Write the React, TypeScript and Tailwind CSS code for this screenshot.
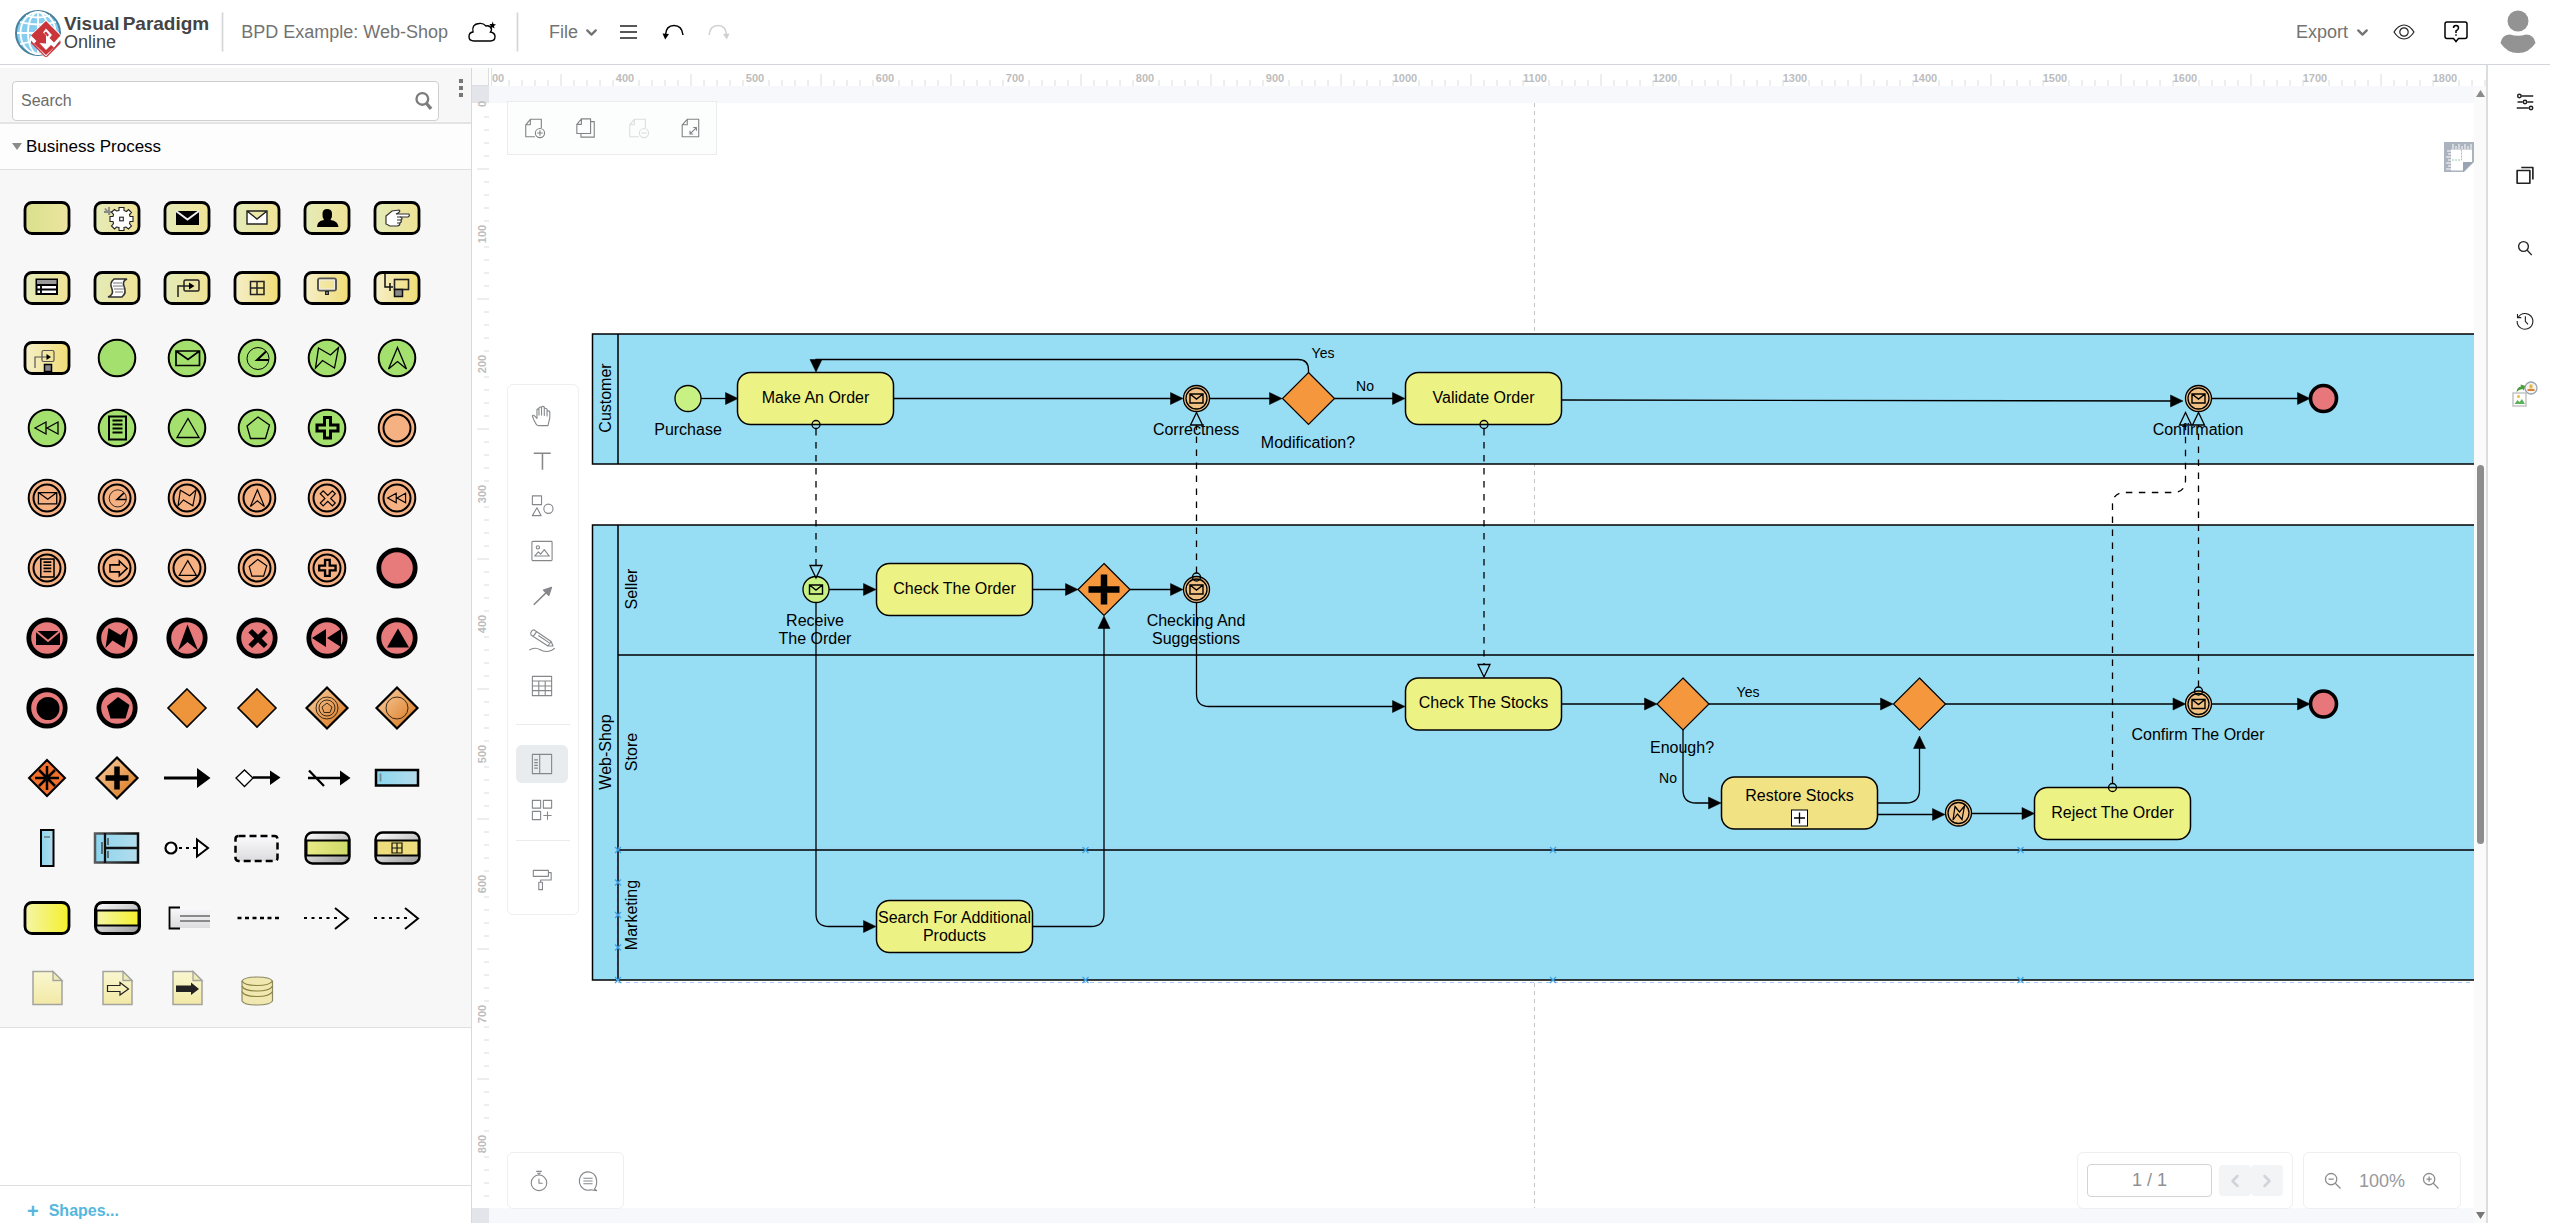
import type { ReactNode } from "react";
import { ChevronDown, ChevronLeft, ChevronRight } from "lucide-react";

/* ---------- shared drawing helpers ---------- */

function Icon({
  children,
  size = 24,
  className = "",
}: {
  children: ReactNode;
  size?: number;
  className?: string;
}) {
  return (
    <svg
      width={size}
      height={size}
      viewBox="0 0 24 24"
      fill="none"
      stroke="currentColor"
      strokeWidth={1.2}
      strokeLinejoin="round"
      className={className}
      aria-hidden="true"
    >
      {children}
    </svg>
  );
}

function Logo() {
  return (
    <svg width="50" height="50" viewBox="12 5 50 50" aria-hidden="true">
      <circle cx="38" cy="31" r="22" fill="#86cdf0" stroke="#47809c" strokeWidth="2" />
      <g fill="none" stroke="#fff" strokeWidth="1.8">
        <ellipse cx="38" cy="31" rx="10" ry="21" />
        <ellipse cx="38" cy="31" rx="17.5" ry="21" />
        <path d="M38 10v42M17 31h42M20 20q18 5 36 0M20 42q18-5 36 0M26 13.500q12 4 24 0" />
      </g>
      <path d="M46 17.500 62.500 34.500 46 57 29.500 38 31 33Z" fill="#fff" />
      <path d="M46 19 60.500 33.500 54 40.500 46 32.500v9L38.500 41 31 33.500Z" fill="#c9353b" />
      <path d="M46 26.500l6 6.500-3 3.500-6-6Z" fill="#fff" />
      <path d="M46 29.500l3 3.500-1.500 1.500L44 31Z" fill="#c9353b" />
      <path d="M31 38.500 46 54.500 60.500 38.500 60.500 41.500 46 56 31 41Z" fill="#c9353b" />
      <path d="M37 38.500 46 48l5-5 3 2.500-8 7.500-12-11.500Z" fill="#c9353b" />
    </svg>
  );
}

/* ---------- shape palette ---------- */

type Tone = "lime" | "mix" | "gold" | "bright";

const toneFill: Record<Tone, string> = {
  lime: "url(#g-lime)",
  mix: "url(#g-mix)",
  gold: "url(#g-gold)",
  bright: "url(#g-bright)",
};

function Gradients() {
  return (
    <svg width="0" height="0" className="absolute" aria-hidden="true">
      <defs>
        <linearGradient id="g-lime"><stop stopColor="#d9e08c" /><stop offset="1" stopColor="#ece5a0" /></linearGradient>
        <linearGradient id="g-mix"><stop stopColor="#e4ebb8" /><stop offset="1" stopColor="#efe295" /></linearGradient>
        <linearGradient id="g-gold"><stop stopColor="#f5efca" /><stop offset="1" stopColor="#f0dc74" /></linearGradient>
        <linearGradient id="g-bright"><stop stopColor="#f5f5a8" /><stop offset="1" stopColor="#f4f02c" /></linearGradient>
        <linearGradient id="g-band"><stop stopColor="#e9ea86" /><stop offset="1" stopColor="#d0d868" /></linearGradient>
        <linearGradient id="g-gray" x2="1" y2="1"><stop stopColor="#fff" /><stop offset="1" stopColor="#9a9a9a" /></linearGradient>
        <linearGradient id="g-pale" x2="0" y2="1"><stop stopColor="#fafafc" /><stop offset="1" stopColor="#dcdcde" /></linearGradient>
        <linearGradient id="g-blue"><stop stopColor="#8bd6f0" /><stop offset="1" stopColor="#b4dcec" /></linearGradient>
        <linearGradient id="g-pool"><stop stopColor="#5a5a5a" /><stop offset="1" stopColor="#0c0c0c" /></linearGradient>
        <linearGradient id="g-orange" x2="1" y2="1"><stop offset="0.200" stopColor="#f3c08c" /><stop offset="0.800" stopColor="#de8430" /></linearGradient>
        <linearGradient id="g-note" x2="0" y2="1"><stop stopColor="#faf7d0" /><stop offset="1" stopColor="#f2e9a6" /></linearGradient>
      </defs>
    </svg>
  );
}

function Task({ tone = "mix", children }: { tone?: Tone; children?: ReactNode }) {
  return (
    <>
      <rect x="-22" y="-15.500" width="44" height="31" rx="7" fill={toneFill[tone]} stroke="#000" strokeWidth="2.800" />
      {children}
    </>
  );
}

function Start({ children }: { children?: ReactNode }) {
  return (
    <>
      <circle r="18.300" fill="#a3e06e" stroke="#000" strokeWidth="2" />
      <g fill="none" stroke="#000" strokeWidth="1.300">{children}</g>
    </>
  );
}

function Mid({ children }: { children?: ReactNode }) {
  return (
    <>
      <circle r="18.300" fill="#f6b183" stroke="#000" strokeWidth="2" />
      <circle r="13.500" fill="none" stroke="#000" strokeWidth="2" />
      <g fill="none" stroke="#000" strokeWidth="1.500" transform="scale(0.780)">{children}</g>
    </>
  );
}

function End({ children }: { children?: ReactNode }) {
  return (
    <>
      <circle r="18.200" fill="#e77a7b" stroke="#000" strokeWidth="4.800" />
      <g fill="#000">{children}</g>
    </>
  );
}

function Diamond({ fill = "#ee943b", r = 19, sw = 1.6, children }: { fill?: string; r?: number; sw?: number; children?: ReactNode }) {
  return (
    <>
      <path d={`M0 ${-r}L${r} 0L0 ${r}L${-r} 0Z`} fill={fill} stroke="#000" strokeWidth={sw} />
      {children}
    </>
  );
}

function Note({ children }: { children?: ReactNode }) {
  return (
    <>
      <path d="M-14-16.500H6L15-7.500V16.500H-14Z" fill="url(#g-note)" stroke="#a3a3a0" strokeWidth="1.500" />
      <path d="M6-16.500V-7.500H15Z" fill="#f0eab4" stroke="#a3a3a0" strokeWidth="1.300" />
      {children}
    </>
  );
}

const envelope = <path d="M-11-7H12.500V7.500H-11ZM-11-7L1 1.500L12.500-7" strokeWidth="1.700" />;
const timer = (
  <>
    <circle cx="1" cy="0.500" r="11" strokeWidth="1" />
    <path d="M9-6.500L0 2H12" strokeWidth="2" />
  </>
);
const bolt = <path d="M-11.500 10L-8.500-10L3.500-3L11.500-10.500L7.500 10L-4.500 2.500Z" />;
const escalate = <path d="M0.500-10.500L9.500 11L0.500 3.500L-8.500 11Z" />;
const rewind = <path d="M-12 0L-1-6V6ZM0 0L11-6V6Z" />;
const rule = (
  <>
    <rect x="-8" y="-11.500" width="17" height="23" strokeWidth="2" />
    <path d="M-4.500-7.500H5.500M-4.500-3.500H5.500M-4.500 0.500H5.500M-4.500 4.500H5.500" strokeWidth="2" />
  </>
);
const triangle = <path d="M1-9.500L12 9.500H-10Z" />;
const pentagon = <path d="M1-11L12.500-3L8.500 10.500H-6.500L-10-2Z" />;
const cross = (
  <path d="M-2.600-11H2.600V-2.600H11V2.600H2.600V11H-2.600V2.600H-11V-2.600H-2.600Z" transform="translate(1 0.500) rotate(45)" />
);
const plusOutline = <path d="M-2.500-10.500H3.500V-3H11V3H3.500V10H-2.500V3H-10V-3H-2.500Z" strokeWidth="3" />;
const linkArrow = <path d="M-9-4H3V-9L13 0.500L3 10V5H-9Z" strokeWidth="2" />;
const gridMark = <path d="M-6.500-6.500H7V6.500H-6.500ZM0-6.500V6.500M-6.500 0H7" fill="none" stroke="#222" strokeWidth="1.500" />;

const palette: { name: string; art: ReactNode }[] = [
  { name: "Task", art: <Task tone="lime" /> },
  {
    name: "Service task",
    art: (
      <Task>
        <path d="M-13-6h8M-8-11v8M-12-9.500l5 6" stroke="#888" strokeWidth="1.800" />
        <g fill="#fff" stroke="#222" strokeWidth="1.100" transform="translate(4.500 1)">
          <path d="M-2.500-11.500H2.500V-8.500L5-7.500L7-9.500L10-6.500L8-4.500L8.500-2.500H11.500V2.500H8.500L8 4.500L10 7L7 10L4.500 8L2.500 8.500V11.500H-2.500V8.500L-5 8L-7 10L-10 7L-8 4.500L-8.500 2.500H-11.500V-2.500H-8.500L-8-4.500L-10-7L-7-9.500L-5-8L-2.500-8.500Z" />
          <rect x="-1.800" y="-1.800" width="3.600" height="3.600" />
        </g>
      </Task>
    ),
  },
  {
    name: "Send task",
    art: (
      <Task>
        <rect x="-11" y="-7" width="23" height="14" />
        <path d="M-11-7L0.500 1.500L12-7" fill="none" stroke="#eee" strokeWidth="2" />
      </Task>
    ),
  },
  {
    name: "Receive task",
    art: (
      <Task>
        <path d="M-10-7H10V6H-10ZM-10-7L0 1L10-7" fill="#fff" stroke="#222" strokeWidth="1.400" />
      </Task>
    ),
  },
  {
    name: "User task",
    art: (
      <Task>
        <path d="M-10 9Q-10 3-3 2Q-5-1-4.500-5Q-4-9 0-9Q4.500-9 5-5Q5.500-1 3.500 2Q11 3 11.500 9Z" />
      </Task>
    ),
  },
  {
    name: "Manual task",
    art: (
      <Task>
        <path d="M-11-2L-5-7L2-8Q4-7 1-5L-1-4H12Q13-2 11-1L4-1Q6 1 4 2Q5 4 3 5Q3 8 0 8H-7L-11 6Z" fill="#fff" stroke="#333" strokeWidth="1.200" />
        <path d="M0-1h4M0 2h4M0 5h3" stroke="#333" strokeWidth="1" />
      </Task>
    ),
  },
  {
    name: "Business rule task",
    art: (
      <Task>
        <path d="M-10.500-8.500H10V6H-10.500Z" fill="#fff" stroke="#000" strokeWidth="2" />
        <path d="M-10-8H9.500V-4H-10Z" fill="#999" />
        <path d="M-10.500-3H10M-10.500 1.500H10M-6-3V6" stroke="#000" strokeWidth="1.800" />
      </Task>
    ),
  },
  {
    name: "Script task",
    art: (
      <Task>
        <path d="M-3-9H10Q5-7 7-2Q10 5 5 9H-9Q-3 7-5 1Q-8-5-3-9Z" fill="#fff" stroke="#333" strokeWidth="1.600" />
        <path d="M-4-5H5M-4-2H6M-3 1H7M-2 4H6" stroke="#777" strokeWidth="1.200" />
      </Task>
    ),
  },
  {
    name: "Reference task",
    art: (
      <Task>
        <rect x="-3" y="-8" width="15" height="11" rx="1.500" fill="none" stroke="#222" strokeWidth="1.500" />
        <path d="M-9 9V-2H4" fill="none" stroke="#222" strokeWidth="1.500" />
        <path d="M2-5.500L7.500-2L2 1.500Z" />
      </Task>
    ),
  },
  { name: "Sub-process", art: <Task tone="gold">{gridMark}</Task> },
  {
    name: "Call activity",
    art: (
      <Task tone="gold">
        <rect x="-9" y="-9.500" width="18" height="12" rx="2" fill="none" stroke="#555" strokeWidth="2" />
        <rect x="-7.500" y="-8" width="15" height="9" fill="none" stroke="#eee" strokeWidth="1" />
        <rect x="-1.500" y="3.500" width="3" height="3" fill="#777" stroke="#222" />
      </Task>
    ),
  },
  {
    name: "Reusable sub-process",
    art: (
      <Task tone="gold">
        <path d="M-12-14V-1H-4M-7-5V3" fill="none" stroke="#111" strokeWidth="1.500" />
        <rect x="-2.500" y="-8.500" width="14" height="10" fill="none" stroke="#222" strokeWidth="1.600" />
        <rect x="-2.500" y="1.500" width="8" height="7" fill="#888" stroke="#111" strokeWidth="1.500" />
      </Task>
    ),
  },
  {
    name: "Reference sub-process",
    art: (
      <Task tone="gold">
        <rect x="-5" y="-7.500" width="12" height="11" rx="1.500" fill="none" stroke="#555" strokeWidth="1.200" />
        <path d="M-12 10V-1H2" fill="none" stroke="#555" strokeWidth="1.200" />
        <path d="M-0.500-4L4-1L-0.500 2Z" />
        <rect x="-2.500" y="6.500" width="7" height="7" fill="#888" stroke="#000" strokeWidth="1.500" />
      </Task>
    ),
  },
  { name: "Start event", art: <Start /> },
  { name: "Message start event", art: <Start>{envelope}</Start> },
  { name: "Timer start event", art: <Start>{timer}</Start> },
  { name: "Error start event", art: <Start>{bolt}</Start> },
  { name: "Escalation start event", art: <Start>{escalate}</Start> },
  { name: "Compensation start event", art: <Start>{rewind}</Start> },
  { name: "Conditional start event", art: <Start>{rule}</Start> },
  { name: "Signal start event", art: <Start>{triangle}</Start> },
  { name: "Multiple start event", art: <Start>{pentagon}</Start> },
  { name: "Parallel start event", art: <Start>{plusOutline}</Start> },
  { name: "Intermediate event", art: <Mid /> },
  { name: "Message intermediate event", art: <Mid>{envelope}</Mid> },
  { name: "Timer intermediate event", art: <Mid>{timer}</Mid> },
  { name: "Error intermediate event", art: <Mid>{bolt}</Mid> },
  { name: "Escalation intermediate event", art: <Mid>{escalate}</Mid> },
  { name: "Cancel intermediate event", art: <Mid>{cross}</Mid> },
  { name: "Compensation intermediate event", art: <Mid>{rewind}</Mid> },
  { name: "Conditional intermediate event", art: <Mid>{rule}</Mid> },
  { name: "Link intermediate event", art: <Mid>{linkArrow}</Mid> },
  { name: "Signal intermediate event", art: <Mid>{triangle}</Mid> },
  { name: "Multiple intermediate event", art: <Mid>{pentagon}</Mid> },
  { name: "Parallel intermediate event", art: <Mid>{plusOutline}</Mid> },
  { name: "End event", art: <End /> },
  {
    name: "Message end event",
    art: (
      <End>
        <rect x="-11" y="-7" width="24" height="14" />
        <path d="M-11-7L1 3L13-7" fill="none" stroke="#e77a7b" strokeWidth="2" />
      </End>
    ),
  },
  { name: "Error end event", art: <End>{bolt}</End> },
  { name: "Escalation end event", art: <End><path d="M0.500-13.500L11 12.500L0.500 4L-9 12.500Z" /></End> },
  { name: "Cancel end event", art: <End>{cross}</End> },
  { name: "Compensation end event", art: <End><path d="M-15 0L-1-9V9ZM0 0L14-9V9Z" /></End> },
  { name: "Signal end event", art: <End>{triangle}</End> },
  { name: "Terminate end event", art: <End><circle cx="1" cy="0.500" r="11.500" /></End> },
  { name: "Multiple end event", art: <End>{pentagon}</End> },
  { name: "Gateway", art: <Diamond /> },
  { name: "Exclusive gateway", art: <Diamond /> },
  {
    name: "Event gateway",
    art: (
      <Diamond fill="url(#g-orange)" r={20.500} sw={2.200}>
        <g fill="none" stroke="#3a2a18" strokeWidth="1">
          <circle r="11" />
          <circle r="8" />
          <path d="M0-5L5-1L3 4.500H-3L-5-1Z" />
        </g>
      </Diamond>
    ),
  },
  {
    name: "Inclusive gateway",
    art: (
      <Diamond fill="url(#g-orange)" r={20.500} sw={2.200}>
        <circle r="11" fill="none" stroke="#3a2a18" strokeWidth="1" />
      </Diamond>
    ),
  },
  {
    name: "Complex gateway",
    art: (
      <Diamond fill="#f0702c" r={18} sw={2}>
        <path d="M0-12V12M-12 0H12M-8-8L8 8M8-8L-8 8" stroke="#000" strokeWidth="2.500" />
      </Diamond>
    ),
  },
  {
    name: "Parallel gateway",
    art: (
      <Diamond fill="url(#g-orange)" r={20.500} sw={2.200}>
        <path d="M0-11.500V11.500M-11.500 0H11.500" stroke="#000" strokeWidth="5.500" />
      </Diamond>
    ),
  },
  { name: "Sequence flow", art: <path d="M-23-1.500H10V-10L23.500 0L10 10V1.500H-23Z" /> },
  {
    name: "Conditional flow",
    art: (
      <>
        <path d="M-4-0.500H14" stroke="#000" strokeWidth="2.500" />
        <path d="M13-7.500L23.500-0.500L13 7Z" />
        <path d="M-21 0L-12.500-8L-4 0L-12.500 8.500Z" fill="#fff" stroke="#000" strokeWidth="1.300" />
      </>
    ),
  },
  {
    name: "Default flow",
    art: (
      <>
        <path d="M-19 0H14M-18-7.500L-3 8" stroke="#000" strokeWidth="2.300" />
        <path d="M13-7.500L23.500 0L13 7.500Z" />
      </>
    ),
  },
  {
    name: "Horizontal pool",
    art: (
      <>
        <rect x="-21" y="-8" width="42" height="15.500" fill="url(#g-blue)" stroke="#000" strokeWidth="2.500" />
        <path d="M-16.500-4.500V3.500" stroke="#7a8a92" strokeWidth="1.800" />
      </>
    ),
  },
  {
    name: "Vertical pool",
    art: (
      <>
        <rect x="-6" y="-18" width="12.500" height="36" fill="url(#g-blue)" stroke="#000" strokeWidth="2" />
        <path d="M-3-11H3" stroke="#6a7a82" strokeWidth="1.500" />
      </>
    ),
  },
  {
    name: "Pool with lanes",
    art: (
      <>
        <rect x="-22" y="-14.500" width="43" height="29" fill="url(#g-blue)" stroke="url(#g-pool)" strokeWidth="2.500" />
        <path d="M-12-15V15M-12 0H21" stroke="#111" strokeWidth="2.300" />
        <path d="M-15-6V6M-9-10V-3M-9 3V10" stroke="#5c6a72" strokeWidth="2" />
      </>
    ),
  },
  {
    name: "Message flow",
    art: (
      <>
        <circle cx="-16" r="5.500" fill="#fff" stroke="#000" strokeWidth="2.200" />
        <path d="M-8 0H10" stroke="#000" strokeWidth="2" strokeDasharray="3 4" />
        <path d="M10-8.500V8.500L21 0Z" fill="#fff" stroke="#000" strokeWidth="2" />
      </>
    ),
  },
  {
    name: "Group",
    art: <rect x="-21.500" y="-12" width="42" height="25" rx="3" fill="url(#g-pale)" stroke="#000" strokeWidth="2.500" strokeDasharray="7 4" />,
  },
  {
    name: "Transaction",
    art: (
      <>
        <rect x="-21.500" y="-15.500" width="44" height="31" rx="7" fill="url(#g-gray)" stroke="#000" strokeWidth="2.400" />
        <rect x="-20.500" y="-7.500" width="42" height="15" fill="url(#g-band)" stroke="#000" strokeWidth="2" />
      </>
    ),
  },
  {
    name: "Transaction sub-process",
    art: (
      <>
        <rect x="-21.500" y="-15.500" width="44" height="31" rx="7" fill="url(#g-gray)" stroke="#000" strokeWidth="2.400" />
        <rect x="-20.500" y="-7.500" width="42" height="15" fill="#efdc7c" stroke="#000" strokeWidth="2" />
        <path d="M-5-5H5V5H-5ZM0-5V5M-5 0H5" fill="none" stroke="#111" strokeWidth="1.200" />
      </>
    ),
  },
  { name: "Choreography", art: <Task tone="bright" /> },
  {
    name: "Choreography task",
    art: (
      <>
        <rect x="-21.500" y="-15.500" width="44" height="31" rx="7" fill="url(#g-gray)" stroke="#000" strokeWidth="3" />
        <rect x="-20.500" y="-7.500" width="42" height="15" fill="url(#g-bright)" stroke="#000" strokeWidth="2" />
      </>
    ),
  },
  {
    name: "Text annotation",
    art: (
      <>
        <rect x="-17" y="-11" width="40" height="21" fill="url(#g-pale)" />
        <path d="M-7-10.500H-17.500V10.500H-7" fill="none" stroke="#000" strokeWidth="1.800" />
        <path d="M-7-2H23M-7 3H23" stroke="#8a8a8a" strokeWidth="1.800" />
      </>
    ),
  },
  { name: "Association", art: <path d="M-19.500 0H22" stroke="#000" strokeWidth="2.600" strokeDasharray="4 3.500" /> },
  {
    name: "Directed association",
    art: (
      <>
        <path d="M-23 0H12" stroke="#000" strokeWidth="2.200" strokeDasharray="3 4.500" />
        <path d="M8-10L21 0.500L8 11" fill="none" stroke="#000" strokeWidth="2" />
      </>
    ),
  },
  {
    name: "Data association",
    art: (
      <>
        <path d="M-23 0H12" stroke="#000" strokeWidth="2.200" strokeDasharray="3 4.500" />
        <path d="M8-10L21 0.500L8 11" fill="none" stroke="#000" strokeWidth="2" />
      </>
    ),
  },
  { name: "Data object", art: <Note /> },
  {
    name: "Data input",
    art: (
      <Note>
        <path d="M-9.500-2.500H3V-5.500L11.500 1L3 7V3.500H-9.500Z" fill="none" stroke="#222" strokeWidth="1.200" />
      </Note>
    ),
  },
  {
    name: "Data output",
    art: (
      <Note>
        <path d="M-11-2.500H4V-5.500L12 1L4 7V4H-11Z" fill="#222" />
      </Note>
    ),
  },
  {
    name: "Data store",
    art: (
      <g fill="#f0e8b0" stroke="#8d8865" strokeWidth="1.200">
        <path d="M-15-7V13Q-13 17 0 17Q13 17 15.500 13V-7Q13-11 0-11Q-13-11-15-7Z" />
        <path d="M-15-7Q-13-2.500 0-2.500Q13-2.500 15.500-7M-15-2Q-13 3 0 3Q13 3 15.500-2M-15 3.500Q-13 8.500 0 8.500Q13 8.500 15.500 3.500" fill="none" stroke="#8a8240" />
      </g>
    ),
  },
];

function Palette() {
  return (
    <aside className="flex w-[472px] shrink-0 flex-col border-r border-[#d8d9dc]">
      <div className="bg-[#f7f7f7]">
        <div className="flex h-14 border-b-2 border-[#e3e4e6] pt-[13px] pl-3">
          <div className="flex h-10 w-[427px] items-center rounded border border-[#cfcfcf] bg-white pr-1 pl-2">
            <input
              aria-label="Search shapes"
              placeholder="Search"
              className="min-w-0 flex-1 bg-transparent text-base text-[#555] outline-none placeholder:text-[#6b6b6b]"
            />
            <button aria-label="Search" className="text-[#7c7c7c]">
              <Icon size={20}>
                <circle cx="10" cy="9.500" r="7" strokeWidth="2.800" />
                <path d="M15 15l5.500 6.500" strokeWidth="4" />
              </Icon>
            </button>
          </div>
          <button aria-label="Palette options" className="-mt-3 ml-5 flex h-10 flex-col items-center justify-end gap-[3px] pb-3">
            <span className="size-1 bg-[#777]" />
            <span className="size-1 bg-[#777]" />
            <span className="size-1 bg-[#777]" />
          </button>
        </div>
        <button className="flex h-[46px] w-full items-center gap-1 border-b border-[#dedfe1] bg-[#fdfdfd] pl-3 text-[17px] text-black">
          <svg width="10" height="7" viewBox="0 0 10 7" aria-hidden="true">
            <path d="M0 0H10L5 7Z" fill="#8b8b8b" />
          </svg>
          Business Process
        </button>
        <div className="grid grid-cols-[repeat(6,70px)] border-b border-[#dedfe1] px-3 pt-[13px] pb-1">
          {palette.map((s) => (
            <button key={s.name} aria-label={s.name} className="flex h-[70px] items-center justify-center">
              <svg width="50" height="50" viewBox="-25 -25 50 50" aria-hidden="true">
                {s.art}
              </svg>
            </button>
          ))}
        </div>
      </div>
      <div className="mt-auto flex h-[38px] items-end border-t border-[#dedfe1] pl-[27px]">
        <a href="#shapes" className="flex items-center gap-[10px] text-base font-bold text-[#55b7de]">
          <span className="text-xl leading-6">+</span> Shapes...
        </a>
      </div>
    </aside>
  );
}

/* ---------- rulers ---------- */

const range = (from: number, to: number, step: number) =>
  Array.from({ length: Math.floor((to - from) / step) + 1 }, (_, i) => from + i * step);

function TopRuler() {
  return (
    <svg className="col-span-2 h-full w-full overflow-hidden" aria-hidden="true">
      {/* the scroll origin falls inside the 300 mark */}
      <path d="M2.500 0V18" stroke="#e2e2e2" />
      <text x={3} y={14} className="fill-[#bdbdbd] text-[11px] font-bold">
        00
      </text>
      {range(310, 1830, 10).map((u) => {
        const x = 137 + (u - 400) * 1.3;
        if (u % 100 === 0)
          return (
            <text key={u} x={x - 1} y={14} textAnchor="middle" className="fill-[#bdbdbd] text-[11px] font-bold">
              {u}
            </text>
          );
        return <path key={u} d={`M${x} ${u % 50 === 0 ? 6 : 12}V18`} stroke="#dcdcdc" strokeWidth="1" />;
      })}
    </svg>
  );
}

function SideRuler() {
  return (
    <svg className="h-full w-full overflow-hidden" aria-hidden="true">
      <rect width="17" height="17" y="0" fill="#e4e5ea" />
      {range(0, 840, 10).map((u) => {
        const y = 18 + u * 1.3;
        if (u % 100 === 0)
          return (
            <text
              key={u}
              textAnchor="middle"
              transform={`translate(14 ${y}) rotate(-90)`}
              className="fill-[#bdbdbd] text-[11px] font-bold"
            >
              {u}
            </text>
          );
        return <path key={u} d={`M${u % 50 === 0 ? 5 : 12} ${y}H17`} stroke="#dcdcdc" strokeWidth="1" />;
      })}
    </svg>
  );
}

/* ---------- diagram ---------- */

type Dir = "right" | "up" | "down";
const turn: Record<Dir, number> = { right: 0, down: 90, up: -90 };

function Head({ x, y, dir = "right", open }: { x: number; y: number; dir?: Dir; open?: boolean }) {
  return (
    <path
      d="M0 0L-12.500-6V6Z"
      transform={`translate(${x} ${y}) rotate(${turn[dir]})`}
      fill={open ? "none" : "#000"}
      stroke="#000"
      strokeWidth={open ? 1.300 : 0.500}
    />
  );
}

function Flow({ d, x, y, dir }: { d: string; x: number; y: number; dir?: Dir }) {
  return (
    <>
      <path d={d} fill="none" stroke="#000" strokeWidth="1.300" />
      <Head x={x} y={y} dir={dir} />
    </>
  );
}

function Message({ d, from, to, dir }: { d: string; from: [number, number]; to: [number, number]; dir: Dir }) {
  return (
    <>
      <path d={d} fill="none" stroke="#000" strokeWidth="1.300" strokeDasharray="6.500 6.500" />
      <circle cx={from[0]} cy={from[1]} r="4" fill="none" stroke="#000" strokeWidth="1.300" />
      <Head x={to[0]} y={to[1]} dir={dir} open />
    </>
  );
}

function Label({ x, y, lines, small }: { x: number; y: number; lines: string[]; small?: boolean }) {
  return (
    <text textAnchor="middle" className={small ? "text-sm" : "text-base"}>
      {lines.map((l, i) => (
        <tspan key={l} x={x} y={y + i * 18}>
          {l}
        </tspan>
      ))}
    </text>
  );
}

function Activity({ x, y, lines, sub }: { x: number; y: number; lines: string[]; sub?: boolean }) {
  const base = y + (sub ? 24 : lines.length > 1 ? 22 : 30);
  return (
    <g>
      <rect x={x} y={y} width="156" height="52" rx="13" fill={sub ? "#f1e283" : "#edf285"} stroke="#000" strokeWidth="1.500" />
      <Label x={x + 78} y={base} lines={lines} />
      {sub && (
        <>
          <rect x={x + 70} y={y + 33} width="16" height="16" fill="#fff" stroke="#000" />
          <path d={`M${x + 78} ${y + 35.5}v11M${x + 72.5} ${y + 41}h11`} stroke="#000" strokeWidth="1.300" />
        </>
      )}
    </g>
  );
}

function Gateway({ x, y, plus }: { x: number; y: number; plus?: boolean }) {
  return (
    <g transform={`translate(${x} ${y})`}>
      <path d="M0-26L26 0L0 26L-26 0Z" fill="#f5973c" stroke="#000" strokeWidth="1.200" />
      {plus && <path d="M0-15V15M-15.500 0H15.500" stroke="#000" strokeWidth="6.500" />}
    </g>
  );
}

function Event({ x, y, kind, mark }: { x: number; y: number; kind: "start" | "mid" | "end"; mark?: "mail" | "bolt" }) {
  const fill = { start: "#c7f283", mid: "#f0c182", end: "#e8777b" }[kind];
  return (
    <g transform={`translate(${x} ${y})`} stroke="#000">
      <circle r="13" fill={fill} strokeWidth={kind === "end" ? 3.600 : 1.300} />
      {kind === "mid" && <circle r="10.500" fill="none" strokeWidth="1.300" />}
      {mark === "mail" && <path d="M-6.500-4.500H6.500V4.500H-6.500ZM-6.500-4.500L0 0.500L6.500-4.500" fill="none" strokeWidth="1.400" />}
      {mark === "bolt" && <path d="M-5.500 7L-3.500-6.500L1-1L6-7L3.500 6.500L-1 1Z" fill="none" strokeWidth="1.200" />}
    </g>
  );
}

function LaneName({ x, y, children }: { x: number; y: number; children: string }) {
  return (
    <text textAnchor="middle" transform={`translate(${x} ${y}) rotate(-90)`} className="text-base">
      {children}
    </text>
  );
}

const handles = [
  ...[618, 1085.5, 1553, 2020.5].flatMap((x) => [[x, 850], [x, 980]]),
  ...[882.5, 915, 947.5].map((y) => [618, y]),
];

function Diagram() {
  return (
    <svg className="h-full w-full" role="img" aria-label="Web-Shop business process diagram">
      <g transform="translate(-489 -86)">
        <path d="M1534.500 103V1208" stroke="#c4c4c4" strokeDasharray="4 4" />
        <g fill="#97ddf4" stroke="#000" strokeWidth="1.500">
          <rect x="592.500" y="334" width="3000" height="130" />
          <rect x="592.500" y="525" width="3000" height="455" />
          <path d="M618 334V464M618 525V980M618 655H3600M618 850H3600" />
        </g>
        <path d="M618 848H3600M618 982.500H3600M616.500 850V980" fill="none" stroke="#a9cbf7" strokeDasharray="4 4" />
        <path
          d={handles.map(([x, y]) => `M${x - 3} ${y - 3}l6 6m0-6l-6 6`).join("")}
          fill="none"
          stroke="#3fa4e6"
          strokeWidth="1.300"
        />

        <LaneName x={611} y={398}>Customer</LaneName>
        <LaneName x={611} y={752}>Web-Shop</LaneName>
        <LaneName x={637} y={589}>Seller</LaneName>
        <LaneName x={637} y={752}>Store</LaneName>
        <LaneName x={637} y={915}>Marketing</LaneName>

        {/* customer pool */}
        <Flow d="M701 398.500H728" x={738} y={398.5} />
        <Flow d="M894 398.500H1175" x={1183} y={398.5} />
        <Flow d="M1209 398.500H1275" x={1282} y={398.5} />
        <Flow d="M1334 398.500H1398" x={1405} y={398.5} />
        <Flow d="M1308.500 373V370Q1308.500 359.500 1298 359.500H816V364" x={816} y={372} dir="down" />
        <Flow d="M1562 400L2175 401" x={2183} y={401} />
        <Flow d="M2212 398.500H2303" x={2310} y={398.5} />

        {/* web-shop pool */}
        <Flow d="M829 589.500H869" x={876} y={589.5} />
        <Flow d="M1033 589.500H1070" x={1078} y={589.5} />
        <Flow d="M1130 589.500H1175" x={1183} y={589.5} />
        <Flow d="M816 603V914Q816 926.500 829 926.500H869" x={876} y={926.5} />
        <Flow d="M1033 926.500H1091Q1104 926.500 1104 914V625" x={1104} y={616} dir="up" />
        <Flow d="M1196.500 603V694Q1196.500 706.500 1209 706.500H1398" x={1405} y={706.5} />
        <Flow d="M1562 704H1650" x={1657} y={704} />
        <Flow d="M1709 704H1886" x={1893} y={704} />
        <Flow d="M1945 704H2178" x={2185.5} y={704} />
        <Flow d="M2212 704H2303" x={2310} y={704} />
        <Flow d="M1683 730V790Q1683 803 1696 803H1713" x={1721} y={803} />
        <Flow d="M1878 803H1906Q1919.500 803 1919.500 790V745" x={1919.5} y={736} dir="up" />
        <Flow d="M1878 814.500H1937" x={1945} y={814.5} />
        <Flow d="M1971 813.500H2027" x={2034.5} y={813.5} />

        <Activity x={737.5} y={372.5} lines={["Make An Order"]} />
        <Activity x={1405.5} y={372.5} lines={["Validate Order"]} />
        <Activity x={876.5} y={563.5} lines={["Check The Order"]} />
        <Activity x={1405.5} y={678} lines={["Check The Stocks"]} />
        <Activity x={1721.5} y={777} lines={["Restore Stocks"]} sub />
        <Activity x={2034.5} y={787.5} lines={["Reject The Order"]} />
        <Activity x={876.5} y={900.5} lines={["Search For Additional", "Products"]} />

        <Gateway x={1308.5} y={398.5} />
        <Gateway x={1104} y={589.5} plus />
        <Gateway x={1683} y={704} />
        <Gateway x={1919.5} y={704} />

        <Event x={688} y={398.5} kind="start" />
        <Event x={1196.5} y={398.5} kind="mid" mark="mail" />
        <Event x={2198.5} y={398.5} kind="mid" mark="mail" />
        <Event x={2323.5} y={398.5} kind="end" />
        <Event x={816} y={589.5} kind="start" mark="mail" />
        <Event x={1196.5} y={589.5} kind="mid" mark="mail" />
        <Event x={2198.5} y={704} kind="mid" mark="mail" />
        <Event x={2323.5} y={704} kind="end" />
        <Event x={1958.5} y={813} kind="mid" mark="bolt" />

        <Message d="M816 429V566" from={[816, 424.5]} to={[816, 578]} dir="down" />
        <Message d="M1196.500 573V425" from={[1196.5, 577]} to={[1196.5, 412.5]} dir="up" />
        <Message d="M1484 429V665" from={[1484, 424.5]} to={[1484, 677]} dir="down" />
        <Message d="M2198.500 687V425" from={[2198.5, 691]} to={[2198.5, 412.5]} dir="up" />
        <Message
          d="M2112.500 783V505Q2112.500 492.500 2125 492.500H2173Q2185.500 492.500 2185.500 480V425"
          from={[2112.5, 787.5]}
          to={[2185.5, 412.5]}
          dir="up"
        />

        <Label x={688} y={435} lines={["Purchase"]} />
        <Label x={1196} y={435} lines={["Correctness"]} />
        <Label x={1308} y={448} lines={["Modification?"]} />
        <Label x={2198} y={435} lines={["Confirmation"]} />
        <Label x={815} y={626} lines={["Receive", "The Order"]} />
        <Label x={1196} y={626} lines={["Checking And", "Suggestions"]} />
        <Label x={1682} y={753} lines={["Enough?"]} />
        <Label x={2198} y={740} lines={["Confirm The Order"]} />
        <Label x={1323} y={358} lines={["Yes"]} small />
        <Label x={1365} y={391} lines={["No"]} small />
        <Label x={1748} y={697} lines={["Yes"]} small />
        <Label x={1668} y={783} lines={["No"]} small />
      </g>
    </svg>
  );
}

/* ---------- floating tool boxes ---------- */

const sheet = "M8 2.500H20V12M3 8.500V21.500H13M3 8.500L8 2.500V8.500Z";

const pageTools = [
  {
    name: "Add page",
    art: (
      <>
        <path d={sheet} />
        <circle cx="18.500" cy="17.500" r="5" />
        <path d="M18.500 14.500v6M15.500 17.500h6" />
      </>
    ),
  },
  {
    name: "Duplicate page",
    art: <path d="M7 2H17V18H2V8L7 2V8H2M17 5H21V22H6.500V18" />,
  },
  {
    name: "Remove page",
    off: true,
    art: (
      <>
        <path d={sheet} />
        <circle cx="18.500" cy="17.500" r="5" />
        <path d="M15.500 17.500h6" />
      </>
    ),
  },
  {
    name: "Resize page",
    art: (
      <>
        <path d="M9 2.500H21.500V21.500H3.500V8.500L9 2.500V8.500H3.500" />
        <path d="M12 18.500L19 11.500M15.500 11.500H19V15M12 15V18.500H15.500" />
      </>
    ),
  },
];

const drawTools = [
  {
    name: "Pan",
    art: (
      <path d="M6 21.500L3 16L1.500 12Q1.500 10.500 3.500 11.500L6.500 14.500V5Q7.500 3.500 8.700 5V11V3Q10 1.500 11.500 3V11V2Q13 0.800 14.500 2.200V11.500V4Q16 3 17.500 4.500V12V7Q19.500 5.500 20.500 7.500V14L18.500 22.500H8Z" />
    ),
  },
  { name: "Text", art: <path d="M3 3.500H21.500M12.500 3.500V21.500" strokeWidth="1.700" /> },
  {
    name: "Shapes",
    art: (
      <>
        <path d="M1.500 1H11.500V10.500H1.500ZM6.500 14L11 22.500H1.500Z" />
        <circle cx="19" cy="15" r="5" />
      </>
    ),
  },
  {
    name: "Image",
    art: (
      <>
        <rect x="1" y="1.500" width="22" height="21" rx="1" />
        <circle cx="7.500" cy="8" r="1.800" />
        <path d="M4 17.500L8 13L10.500 15.500L14.500 10.500L20 17.500Z" />
      </>
    ),
  },
  {
    name: "Connector",
    art: (
      <>
        <path d="M3 21.500L18 7" strokeWidth="1.700" />
        <path d="M22.500 2.500L19.500 11.500L13.500 5.500Z" fill="currentColor" />
      </>
    ),
  },
  {
    name: "Pencil",
    art: (
      <>
        <path d="M3.500 0L22 12.500L24 17.500L18.500 17.500L0 5.500Q-1 3.500 0.500 1.500Q2-0.500 3.500 0ZM6 2L2.500 7M22 12.500L18.500 17.500M8 6L20 14" />
        <path d="M-2 22Q4 18 10 21.500T22.500 22L26 20" />
      </>
    ),
  },
  {
    name: "Table",
    art: <path d="M1.500 1.500H22.500V22.500H1.500ZM1.500 6.500H22.500M1.500 12H22.500M1.500 17H22.500M8.500 6.500V22.500M15.500 6.500V22.500" />,
  },
];

function DrawButton({ name, active, children }: { name: string; active?: boolean; children: ReactNode }) {
  return (
    <button
      aria-label={name}
      className={
        active
          ? "flex h-[38px] w-[52px] items-center justify-center rounded-md bg-[#e9ecee]"
          : "flex h-[45px] w-[52px] items-center justify-center"
      }
    >
      <Icon size={22} className="overflow-visible">{children}</Icon>
    </button>
  );
}

const boxClass = "absolute rounded-md border border-[#efeff1] bg-white text-[#85878a]";

function Canvas() {
  return (
    <main className="relative min-h-0 overflow-hidden bg-white">
      <div className="absolute inset-x-0 top-0 h-[17px] bg-[#f7f8fb]" />
      <div className="absolute inset-x-0 bottom-0 h-[15px] bg-[#f7f8fb]" />
      <div className="absolute inset-0">
        <Diagram />
      </div>

      <div className="absolute top-[15px] left-[18px] flex h-[54px] w-[210px] items-center border border-[#ececee] bg-[#fcfefd] pl-3">
        {pageTools.map((t) => (
          <button
            key={t.name}
            aria-label={t.name}
            disabled={t.off}
            className="flex h-10 w-[52px] shrink-0 items-center pl-[3px] text-[#808285] last:w-7 disabled:text-[#dcdddf]"
          >
            <Icon size={22}>{t.art}</Icon>
          </button>
        ))}
      </div>

      <div className={`${boxClass} top-[298px] left-[18px] flex w-[72px] flex-col items-start pt-2 pb-[12px] pl-2`}>
        {drawTools.map((t) => (
          <DrawButton key={t.name} name={t.name}>
            {t.art}
          </DrawButton>
        ))}
        <hr className="mt-4 mb-5 w-[54px] border-[#ebebed]" />
        <DrawButton name="Shape panel" active>
          <path d="M1.500 1.500H22.500V22.500H1.500ZM9.500 1.500V22.500M3.500 7.500H7.500M3.500 10.500H7.500M3.500 13.500H7.500M3.500 16.500H7.500" />
        </DrawButton>
        <div className="h-1" />
        <DrawButton name="More diagrams">
          <path d="M1.500 1.500H10.500V10H1.500ZM13.500 1.500H22.500V10H13.500ZM1.500 13.500H10.500V22.500H1.500ZM18 13.500V22.500M13.500 18H22.500" />
        </DrawButton>
        <hr className="mt-2 mb-4 w-[54px] border-[#ebebed]" />
        <DrawButton name="Format painter">
          <path d="M2.500 1.500H19V8H2.500ZM19 4H22V12H10.500V14.500M8.500 14.500H12.500V22.500H8.500Z" />
        </DrawButton>
      </div>

      <div className={`${boxClass} bottom-[14px] left-[18px] flex h-[57px] w-[117px] items-center gap-[27px] pl-5`}>
        <button aria-label="Timer">
          <Icon size={22}>
            <circle cx="12" cy="14" r="8.500" />
            <path d="M9 1.500h6M10 3.500h4M12 3.500v2M12 9.500v5h4" />
          </Icon>
        </button>
        <button aria-label="Comments">
          <Icon size={22}>
            <path d="M19 20.500Q21.500 18 21.500 12A9.500 10 0 1 0 15 21.500L21.500 22.500ZM7 9h10M7 12h10M7 15h10" />
          </Icon>
        </button>
      </div>

      <div className="absolute right-[13px] bottom-[14px] flex gap-[10px]">
        <div className="flex h-[57px] items-center gap-[7px] rounded-md border border-[#efeff1] bg-white px-[9px]">
          <input
            aria-label="Page"
            defaultValue="1 / 1"
            className="h-[33px] w-[125px] rounded border border-[#d2d3d5] bg-white text-center text-lg text-[#8f9193] outline-none"
          />
          <div className="flex">
            <button aria-label="Previous page" className="flex h-[31px] w-8 items-center justify-center rounded bg-[#f3f4f6] text-[#d0d4da]">
              <ChevronLeft size={20} strokeWidth={3} />
            </button>
            <button aria-label="Next page" className="flex h-[31px] w-8 items-center justify-center rounded bg-[#f3f4f6] text-[#d0d4da]">
              <ChevronRight size={20} strokeWidth={3} />
            </button>
          </div>
        </div>
        <div className="flex h-[57px] w-[158px] items-center justify-center gap-[17px] rounded-md border border-[#efeff1] bg-white text-[#8a8c8e]">
          <button aria-label="Zoom out">
            <Icon size={18}>
              <circle cx="9.500" cy="9.500" r="7.500" strokeWidth="1.700" />
              <path d="M15 15l7 7M6 9.500h7" strokeWidth="1.700" />
            </Icon>
          </button>
          <span className="pt-px text-lg text-[#97999b]">100%</span>
          <button aria-label="Zoom in">
            <Icon size={18}>
              <circle cx="9.500" cy="9.500" r="7.500" strokeWidth="1.700" />
              <path d="M15 15l7 7M6 9.500h7M9.500 6v7" strokeWidth="1.700" />
            </Icon>
          </button>
        </div>
      </div>

      <button aria-label="Page setup" className="absolute top-14 right-0">
        <svg width="30" height="30" viewBox="0 0 30 30" aria-hidden="true">
          <path d="M0 0H30V20L20 30H0Z" fill="#abb3bf" />
          <path d="M7 7.500H28V19.500L19 28.500H7Z" fill="#fff" />
          <path d="M19 20H29L19 30Z" fill="#9aa3b1" />
          <path d="M9 2v5M12 4v3M15 2v5M18 4v3M21 2v5M24 4v3M27 2v5M3 9h4M4 12h3M2 15h5M4 18h3M2 21h5M4 24h3M2 27h5" stroke="#fff" strokeWidth="1" />
          <path d="M17.500 7.500V18H7" fill="none" stroke="#8fd0a0" strokeDasharray="2 1" />
        </svg>
      </button>
    </main>
  );
}

function ScrollBar() {
  return (
    <div className="flex flex-col items-center bg-[#fafafa] pt-1 pb-1">
      <svg width="9" height="7" viewBox="0 0 9 7" aria-hidden="true">
        <path d="M0 7L4.500 0L9 7Z" fill="#8b8b8b" />
      </svg>
      <div className="flex w-[7px] flex-1 flex-col">
        <div className="grow-33" />
        <div className="grow-34 rounded-full bg-[#8d8d8d]" />
        <div className="grow-33" />
      </div>
      <svg width="9" height="7" viewBox="0 0 9 7" aria-hidden="true">
        <path d="M0 0H9L4.500 7Z" fill="#777" />
      </svg>
    </div>
  );
}

/* ---------- frame ---------- */

const sideTools = [
  {
    name: "Format",
    art: (
      <g strokeWidth="2">
        <path d="M7 4H23M2 12H9M15 12H23M1 20H17" />
        <circle cx="4.500" cy="4" r="2.300" />
        <circle cx="12" cy="12" r="2.300" />
        <circle cx="20" cy="20" r="2.300" />
      </g>
    ),
  },
  { name: "Pages", art: <path d="M1.500 6H18.500V23H1.500ZM7 2H22.500V18" strokeWidth="2.200" /> },
  {
    name: "Find",
    art: (
      <g strokeWidth="1.800">
        <circle cx="10" cy="10" r="6.500" />
        <path d="M15 15l6 6.500" />
      </g>
    ),
  },
  {
    name: "History",
    art: (
      <path d="M3 7A10.500 10.500 0 1 1 1.500 12M2 2.500V7.500H7M12.500 5.500V12.500L16 16.500" strokeWidth="1.500" />
    ),
  },
];

function SideBar() {
  return (
    <aside className="-mt-[3px] flex w-16 shrink-0 flex-col items-stretch border-l-2 border-[#dcdde1] pl-3 text-[#222]">
      {sideTools.map((t) => (
        <button key={t.name} aria-label={t.name} className="flex h-[73px] items-center justify-center">
          <Icon size={18} className="overflow-visible">{t.art}</Icon>
        </button>
      ))}
      <button aria-label="Convert image" className="flex h-[73px] items-center justify-center">
        <svg width="26" height="26" viewBox="0 0 26 26" aria-hidden="true">
          <rect x="1" y="12" width="13" height="13" fill="#fff" stroke="#c4c4c4" strokeWidth="1.500" />
          <path d="M2.500 23L5.500 19L7.500 21L10 18L13 23Z" fill="#5fb05a" />
          <circle cx="6.500" cy="15.500" r="1.500" fill="#f0b93a" />
          <path d="M4.500 11Q5 6 9 5.500L8.500 3.500L14 5L11.500 9.500L10.500 8Q7 8.500 4.500 11Z" fill="#4c9f38" />
          <circle cx="19" cy="7" r="6" fill="#f5f5ee" stroke="#9aa5b5" strokeWidth="1.300" />
          <path d="M19 3.500V7.500" stroke="#e8b34a" strokeWidth="3" />
          <path d="M15.500 9H22.500" stroke="#d9823a" strokeWidth="2" />
        </svg>
      </button>
    </aside>
  );
}

const Chevron = () => <ChevronDown size={17} strokeWidth={3.200} className="text-[#737373]" />;

function Header() {
  return (
    <header className="flex h-[65px] shrink-0 items-center border-b border-[#d3d5dc] pl-3 text-lg text-[#737373]">
      <a href="#home" className="flex items-center gap-[2px]" aria-label="Visual Paradigm Online">
        <Logo />
        <span className="flex flex-col text-[#444]">
          <b className="text-[19px] leading-[19px]">
            Visual<span className="pl-[3px]">Paradigm</span>
          </b>
          <span className="leading-[18px]">Online</span>
        </span>
      </a>
      <div className="ml-[13px] h-[38px] w-px bg-[#d5d6d8] ring-1 ring-[#f0f0f0]" />
      <h1 className="ml-[18px] text-lg">BPD Example: Web-Shop</h1>
      <button aria-label="Saved to cloud" className="ml-5 text-black">
        <svg width="28" height="22" viewBox="0 0 28 22" fill="none" stroke="currentColor" strokeWidth="1.400" aria-hidden="true">
          <path d="M6 20Q1 20 1 15.500Q1 11.500 5 11Q3.500 3 11 2.500Q15 1.800 18 5Q22 4 23.500 8Q23.500 10 22.500 11Q27 12 27 15.500Q27 20 22.500 20Z" />
          <path d="M24.500 0.500L25.500 3L28 3.500L26 5L26.500 7.500L24.500 6.200L22 7.500L22.700 5L21.500 3L24 3Z" fill="currentColor" stroke="none" />
        </svg>
      </button>
      <div className="ml-[21px] h-[38px] w-px bg-[#d5d6d8] ring-1 ring-[#f0f0f0]" />
      <button className="ml-[31px] flex items-center gap-[5px]">
        File <Chevron />
      </button>
      <button aria-label="Menu" className="ml-5 text-[#222]">
        <svg width="17" height="14" viewBox="0 0 17 14" stroke="currentColor" strokeWidth="1.500" aria-hidden="true">
          <path d="M0 1H17M0 7H17M0 13H17" />
        </svg>
      </button>
      {[
        { name: "Undo", cls: "ml-[25px] text-black", flip: undefined },
        { name: "Redo", cls: "ml-6 text-[#d0d0d0]", flip: "translate(22 0) scale(-1 1)" },
      ].map((b) => (
        <button key={b.name} aria-label={b.name} className={b.cls} disabled={b.name === "Redo"}>
          <svg width="22" height="16" viewBox="0 0 22 16" fill="none" stroke="currentColor" strokeWidth="1.500" aria-hidden="true">
            <g transform={b.flip}>
              <path d="M3.500 11Q4 1.500 12 1.500Q20 1.500 21 11" />
              <path d="M0.500 9.500L7 10L3.200 15.500Z" fill="currentColor" stroke="none" />
            </g>
          </svg>
        </button>
      ))}

      <div className="mr-[14px] ml-auto flex items-center">
        <button className="flex items-center gap-[6px]">
          Export <Chevron />
        </button>
        <button aria-label="Preview" className="ml-[22px] text-[#222]">
          <svg width="22" height="16" viewBox="0 0 22 16" fill="none" stroke="currentColor" strokeWidth="1.200" aria-hidden="true">
            <path d="M1 8Q5.500 1 11 1T21 8Q16.500 15 11 15T1 8Z" />
            <circle cx="11" cy="8" r="4.200" />
          </svg>
        </button>
        <button aria-label="Help" className="ml-[29px] flex text-black">
          <svg width="24" height="22" viewBox="0 0 24 22" fill="none" stroke="currentColor" strokeWidth="1.500" aria-hidden="true">
            <path d="M3 1H21Q23 1 23 3V15.500Q23 17.500 21 17.500H14.500L12 20.500L9.500 17.500H3Q1 17.500 1 15.500V3Q1 1 3 1Z" />
            <path d="M9.500 7Q9.500 4.500 12 4.500T14.500 7Q14.500 8.500 12 10V12M12 13.300V14.800" />
          </svg>
        </button>
        <button aria-label="Account" className="ml-8">
          <svg width="36" height="44" viewBox="0 0 36 44" fill="#939393" aria-hidden="true">
            <circle cx="18" cy="11" r="10.500" />
            <path d="M0.500 33Q2 24.500 10 24.500Q18 27 26 24.500Q34 24.500 35.500 33Q29 43 18 43T0.500 33Z" />
          </svg>
        </button>
      </div>
    </header>
  );
}

export default function App() {
  return (
    <div className="flex h-screen flex-col overflow-hidden bg-white font-['Liberation_Sans',Arial,sans-serif]">
      <Gradients />
      <Header />
      <div className="flex min-h-0 flex-1 pt-[3px]">
        <Palette />
        <div className="grid min-w-0 flex-1 grid-cols-[17px_1fr_12px] grid-rows-[18px_1fr]">
          <div className="border-r border-b border-[#dcdde1] bg-[#fafafa]" />
          <TopRuler />
          <div className="relative min-h-0">
            <SideRuler />
            <div className="absolute inset-x-0 bottom-0 h-[15px] bg-[#e4e5ea]" />
          </div>
          <Canvas />
          <ScrollBar />
        </div>
        <SideBar />
      </div>
    </div>
  );
}
